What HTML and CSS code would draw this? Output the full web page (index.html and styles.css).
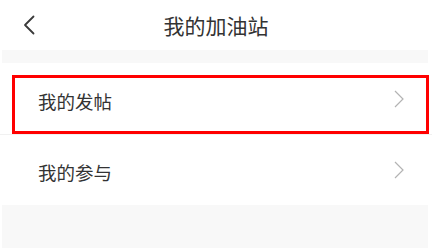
FILE: index.html
```html
<!DOCTYPE html>
<html lang="zh">
<head>
<meta charset="utf-8">
<link rel="stylesheet" href="styles.css">
</head>
<body>
<div class="page">
  <header class="header">
    <span class="back">
      <svg width="12" height="20" viewBox="0 0 12 20"><polyline points="10.5,1.5 2,10 10.5,18.5" fill="none" stroke="#3a3a3a" stroke-width="1.8" stroke-linecap="round" stroke-linejoin="round"/></svg>
    </span>
    <h1 class="title">我的加油站</h1>
    <span></span>
  </header>
  <div class="band"></div>
  <ul class="list">
    <li class="row">
      <span class="label">我的发帖</span>
      <svg class="arrow" width="10" height="18" viewBox="0 0 10 18"><polyline points="1,1 9,9 1,17" fill="none" stroke="#b3b3b3" stroke-width="1.2"/></svg>
    </li>
    <li class="row">
      <span class="label">我的参与</span>
      <svg class="arrow" width="10" height="18" viewBox="0 0 10 18"><polyline points="1,1 9,9 1,17" fill="none" stroke="#b3b3b3" stroke-width="1.2"/></svg>
    </li>
  </ul>
  <div class="footer"></div>
  <div class="highlight"></div>
</div>
</body>
</html>
```
FILE: styles.css
```css
html, body {
  margin: 0;
  padding: 0;
  background: #ffffff;
}
body {
  font-family: "Noto Sans CJK SC", "Noto Sans", sans-serif;
  color: #333333;
}
.page {
  position: relative;
  width: 432px;
  height: 248px;
  display: flex;
  flex-direction: column;
  overflow: hidden;
}
.header {
  height: 50px;
  display: grid;
  grid-template-columns: 60px 1fr 60px;
  align-items: center;
}
.back {
  display: flex;
  align-items: center;
  padding-left: 23px;
}
.back svg {
  display: block;
}
.title {
  margin: 0;
  text-align: center;
  font-size: 21px;
  font-weight: 400;
  color: #333333;
  line-height: 50px;
}
.band {
  height: 13px;
  margin: 0 4px 0 2px;
  background: #f8f8f8;
}
.list {
  list-style: none;
  margin: 0;
  padding: 0;
}
.row {
  height: 71px;
  display: flex;
  align-items: center;
  justify-content: space-between;
  padding: 0 28px 0 38px;
  box-sizing: border-box;
}
.row + .row {
  border-top: 1px solid #f1f1f1;
}
.label {
  font-size: 18.5px;
  color: #333333;
  position: relative;
  top: 2px;
}
.arrow {
  display: block;
}
.footer {
  flex: 1;
  margin: 0 4px 0 2px;
  background: #f8f8f8;
}
.highlight {
  position: absolute;
  left: 12px;
  top: 75px;
  width: 417px;
  height: 59px;
  border: 3px solid #ff0000;
  box-sizing: border-box;
}
```
